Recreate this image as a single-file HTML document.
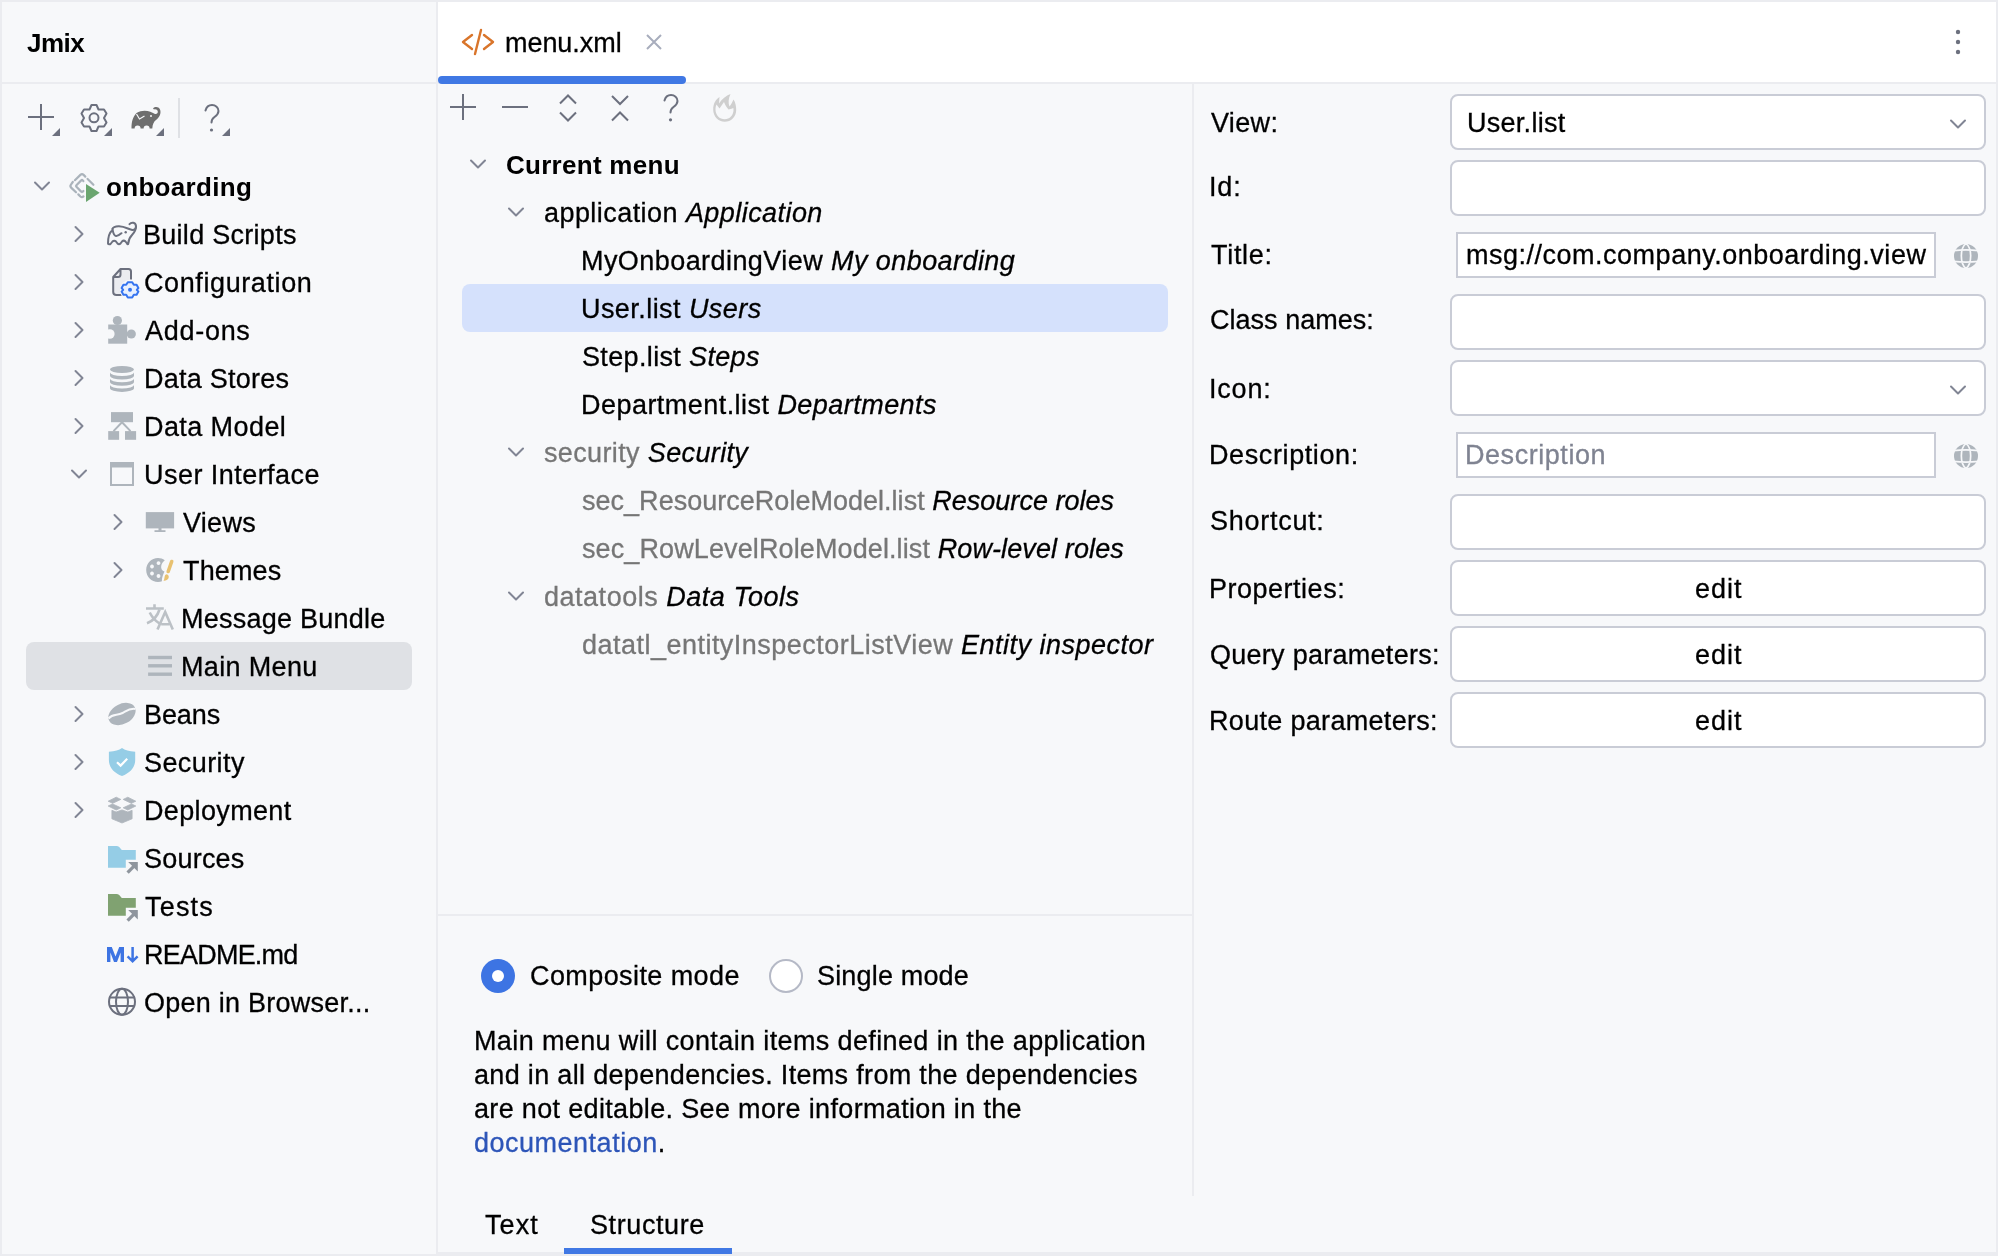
<!DOCTYPE html>
<html><head><meta charset="utf-8"><style>
html,body{margin:0;padding:0}
body{width:1998px;height:1256px;position:relative;overflow:hidden;background:#ebecf0;font-family:"Liberation Sans",sans-serif;color:#000}
.r{position:absolute}
.t{position:absolute;white-space:pre;font-size:27px;line-height:32px;letter-spacing:0.35px;will-change:transform;-webkit-text-stroke:0.3px}
.t.b, .t b{font-weight:bold;font-size:26px;letter-spacing:0.1px;-webkit-text-stroke:0}
.g{color:#767676}
.ph{color:#7f8391}
.lnk{color:#2d55b8}
.fld{position:absolute;box-sizing:border-box;background:#fff;border:2px solid #c9ccd6;border-radius:8px}
.fld.sq{border-radius:0}
i{font-style:italic}
</style></head><body>
<div class="r" style="left:2px;top:2px;width:434px;height:80px;background:#f7f8fa;"></div>
<div class="r" style="left:2px;top:84px;width:434px;height:1170px;background:#f7f8fa;"></div>
<div class="r" style="left:438px;top:2px;width:1558px;height:80px;background:#ffffff;"></div>
<div class="r" style="left:438px;top:84px;width:1558px;height:1168px;background:#f7f8fa;"></div>
<div class="r" style="left:1192px;top:84px;width:2px;height:1112px;background:#ebecf0;"></div>
<div class="r" style="left:438px;top:914px;width:754px;height:2px;background:#ebecf0;"></div>
<div class="t b" style="left:26.70px;top:27px;letter-spacing:-0.500px;">Jmix</div>
<svg class="r" style="left:0;top:90px" width="240" height="50" viewBox="0 90 240 50" fill="none"><path d="M28 117 H54 M41 104 V130" stroke="#6c707e" stroke-width="2"/><path d="M52 136 L60 128 L60 136 Z" fill="#6c707e"/><path d="M104 136 L112 128 L112 136 Z" fill="#6c707e"/><path d="M156 136 L164 128 L164 136 Z" fill="#6c707e"/><path d="M222 136 L230 128 L230 136 Z" fill="#6c707e"/></svg>
<div class="r" style="left:178px;top:98px;width:2px;height:40px;background:#dfe1e5;"></div>
<div class="r" style="left:26px;top:642px;width:386px;height:48px;background:#dfe1e5;border-radius:8px"></div>
<svg class="r" style="left:32px;top:179px;" width="20" height="14" viewBox="0 0 20 14" fill="none" stroke-linecap="butt"><path d="M3 3.5 L10 10.5 L17 3.5" stroke="#818594" stroke-width="2" stroke-linecap="round" stroke-linejoin="round"/></svg>
<div class="t b" style="left:105.80px;top:171px;letter-spacing:0.322px;">onboarding</div>
<svg class="r" style="left:72px;top:224px;" width="14" height="20" viewBox="0 0 14 20" fill="none" stroke-linecap="butt"><path d="M3.5 3 L10.5 10 L3.5 17" stroke="#818594" stroke-width="2" stroke-linecap="round" stroke-linejoin="round"/></svg>
<div class="t " style="left:143.30px;top:219px;letter-spacing:0.283px;">Build Scripts</div>
<svg class="r" style="left:72px;top:272px;" width="14" height="20" viewBox="0 0 14 20" fill="none" stroke-linecap="butt"><path d="M3.5 3 L10.5 10 L3.5 17" stroke="#818594" stroke-width="2" stroke-linecap="round" stroke-linejoin="round"/></svg>
<div class="t " style="left:143.70px;top:267px;letter-spacing:0.600px;">Configuration</div>
<svg class="r" style="left:72px;top:320px;" width="14" height="20" viewBox="0 0 14 20" fill="none" stroke-linecap="butt"><path d="M3.5 3 L10.5 10 L3.5 17" stroke="#818594" stroke-width="2" stroke-linecap="round" stroke-linejoin="round"/></svg>
<div class="t " style="left:145.00px;top:315px;letter-spacing:0.717px;">Add-ons</div>
<svg class="r" style="left:72px;top:368px;" width="14" height="20" viewBox="0 0 14 20" fill="none" stroke-linecap="butt"><path d="M3.5 3 L10.5 10 L3.5 17" stroke="#818594" stroke-width="2" stroke-linecap="round" stroke-linejoin="round"/></svg>
<div class="t " style="left:143.50px;top:363px;letter-spacing:0.250px;">Data Stores</div>
<svg class="r" style="left:72px;top:416px;" width="14" height="20" viewBox="0 0 14 20" fill="none" stroke-linecap="butt"><path d="M3.5 3 L10.5 10 L3.5 17" stroke="#818594" stroke-width="2" stroke-linecap="round" stroke-linejoin="round"/></svg>
<div class="t " style="left:143.50px;top:411px;letter-spacing:0.417px;">Data Model</div>
<svg class="r" style="left:69px;top:467px;" width="20" height="14" viewBox="0 0 20 14" fill="none" stroke-linecap="butt"><path d="M3 3.5 L10 10.5 L17 3.5" stroke="#818594" stroke-width="2" stroke-linecap="round" stroke-linejoin="round"/></svg>
<div class="t " style="left:143.50px;top:459px;letter-spacing:0.458px;">User Interface</div>
<svg class="r" style="left:110.5px;top:512px;" width="14" height="20" viewBox="0 0 14 20" fill="none" stroke-linecap="butt"><path d="M3.5 3 L10.5 10 L3.5 17" stroke="#818594" stroke-width="2" stroke-linecap="round" stroke-linejoin="round"/></svg>
<div class="t " style="left:182.90px;top:507px;letter-spacing:0.300px;">Views</div>
<svg class="r" style="left:110.5px;top:560px;" width="14" height="20" viewBox="0 0 14 20" fill="none" stroke-linecap="butt"><path d="M3.5 3 L10.5 10 L3.5 17" stroke="#818594" stroke-width="2" stroke-linecap="round" stroke-linejoin="round"/></svg>
<div class="t " style="left:182.50px;top:555px;letter-spacing:0.150px;">Themes</div>
<div class="t " style="left:181.00px;top:603px;letter-spacing:0.242px;">Message Bundle</div>
<div class="t " style="left:181.40px;top:651px;letter-spacing:0.350px;">Main Menu</div>
<svg class="r" style="left:72px;top:704px;" width="14" height="20" viewBox="0 0 14 20" fill="none" stroke-linecap="butt"><path d="M3.5 3 L10.5 10 L3.5 17" stroke="#818594" stroke-width="2" stroke-linecap="round" stroke-linejoin="round"/></svg>
<div class="t " style="left:143.50px;top:699px;letter-spacing:-0.100px;">Beans</div>
<svg class="r" style="left:72px;top:752px;" width="14" height="20" viewBox="0 0 14 20" fill="none" stroke-linecap="butt"><path d="M3.5 3 L10.5 10 L3.5 17" stroke="#818594" stroke-width="2" stroke-linecap="round" stroke-linejoin="round"/></svg>
<div class="t " style="left:144.00px;top:747px;letter-spacing:0.407px;">Security</div>
<svg class="r" style="left:72px;top:800px;" width="14" height="20" viewBox="0 0 14 20" fill="none" stroke-linecap="butt"><path d="M3.5 3 L10.5 10 L3.5 17" stroke="#818594" stroke-width="2" stroke-linecap="round" stroke-linejoin="round"/></svg>
<div class="t " style="left:143.50px;top:795px;letter-spacing:0.350px;">Deployment</div>
<div class="t " style="left:144.00px;top:843px;letter-spacing:0.217px;">Sources</div>
<div class="t " style="left:144.50px;top:891px;letter-spacing:1.200px;">Tests</div>
<div class="t " style="left:143.50px;top:939px;letter-spacing:-0.775px;">README.md</div>
<div class="t " style="left:144.00px;top:987px;letter-spacing:0.244px;">Open in Browser...</div>
<svg class="r" style="left:458px;top:26px;" width="40" height="32" viewBox="0 0 40 32" fill="none" stroke-linecap="butt"><path d="M14 9 L5 16 L14 23 M26 9 L35 16 L26 23 M23 4 L17 28" stroke="#d9752b" stroke-width="2.4" stroke-linecap="round" stroke-linejoin="round"/></svg>
<div class="t " style="left:504.80px;top:27px;letter-spacing:-0.050px;">menu.xml</div>
<svg class="r" style="left:644px;top:32px;" width="20" height="20" viewBox="0 0 20 20" fill="none" stroke-linecap="butt"><path d="M3 3 L17 17 M17 3 L3 17" stroke="#a8adbd" stroke-width="2"/></svg>
<div class="r" style="left:438px;top:76px;width:248px;height:8px;background:#4078e4;border-radius:4px"></div>
<svg class="r" style="left:1950px;top:26px" width="16" height="32" viewBox="0 0 16 32"><circle cx="8" cy="6" r="2.2" fill="#6c707e"/><circle cx="8" cy="16" r="2.2" fill="#6c707e"/><circle cx="8" cy="26" r="2.2" fill="#6c707e"/></svg>
<svg class="r" style="left:440px;top:86px" width="320" height="50" viewBox="440 86 320 50" fill="none" stroke="#6c707e" stroke-width="2"><path d="M450 107 H476 M463 94 V120"/><path d="M502 107 H528"/><path d="M560 103.5 L568 95.5 L576 103.5 M560 112.5 L568 120.5 L576 112.5"/><path d="M612 96 L620 104 L628 96 M612 120.5 L620 112.5 L628 120.5"/></svg>
<div class="r" style="left:462px;top:284px;width:706px;height:48px;background:#d5e1fc;border-radius:8px"></div>
<svg class="r" style="left:468px;top:157px;" width="20" height="14" viewBox="0 0 20 14" fill="none" stroke-linecap="butt"><path d="M3 3.5 L10 10.5 L17 3.5" stroke="#818594" stroke-width="2" stroke-linecap="round" stroke-linejoin="round"/></svg>
<div class="t " style="left:506.30px;top:149px;letter-spacing:0.282px;"><b style="letter-spacing:0.282px">Current menu</b></div>
<svg class="r" style="left:506px;top:205px;" width="20" height="14" viewBox="0 0 20 14" fill="none" stroke-linecap="butt"><path d="M3 3.5 L10 10.5 L17 3.5" stroke="#818594" stroke-width="2" stroke-linecap="round" stroke-linejoin="round"/></svg>
<div class="t " style="left:543.50px;top:197px;letter-spacing:0.441px;">application <i>Application</i></div>
<div class="t " style="left:581.00px;top:245px;letter-spacing:0.433px;">MyOnboardingView <i>My onboarding</i></div>
<div class="t " style="left:581.00px;top:293px;letter-spacing:0.436px;">User.list <i>Users</i></div>
<div class="t " style="left:582.00px;top:341px;letter-spacing:0.350px;">Step.list <i>Steps</i></div>
<div class="t " style="left:581.00px;top:389px;letter-spacing:0.458px;">Department.list <i>Departments</i></div>
<svg class="r" style="left:506px;top:445px;" width="20" height="14" viewBox="0 0 20 14" fill="none" stroke-linecap="butt"><path d="M3 3.5 L10 10.5 L17 3.5" stroke="#818594" stroke-width="2" stroke-linecap="round" stroke-linejoin="round"/></svg>
<div class="t " style="left:543.50px;top:437px;letter-spacing:0.362px;"><span class="g">security</span> <i>Security</i></div>
<div class="t " style="left:582.20px;top:485px;letter-spacing:0.020px;"><span class="g">sec_ResourceRoleModel.list</span> <i>Resource roles</i></div>
<div class="t " style="left:582.20px;top:533px;letter-spacing:0.111px;"><span class="g">sec_RowLevelRoleModel.list</span> <i>Row-level roles</i></div>
<svg class="r" style="left:506px;top:589px;" width="20" height="14" viewBox="0 0 20 14" fill="none" stroke-linecap="butt"><path d="M3 3.5 L10 10.5 L17 3.5" stroke="#818594" stroke-width="2" stroke-linecap="round" stroke-linejoin="round"/></svg>
<div class="t " style="left:543.50px;top:581px;letter-spacing:0.518px;"><span class="g">datatools</span> <i>Data Tools</i></div>
<div class="t " style="left:581.50px;top:629px;letter-spacing:0.480px;"><span class="g">datatl_entityInspectorListView</span> <i>Entity inspector</i></div>
<svg class="r" style="left:478px;top:956px" width="40" height="40" viewBox="0 0 40 40"><circle cx="20" cy="20" r="17" fill="#3d74e3"/><circle cx="20" cy="20" r="6" fill="#fff"/></svg>
<svg class="r" style="left:766px;top:956px" width="40" height="40" viewBox="0 0 40 40"><circle cx="20" cy="20" r="16" fill="#fff" stroke="#b5b9c6" stroke-width="2"/></svg>
<div class="t " style="left:530.30px;top:960px;letter-spacing:0.412px;">Composite mode</div>
<div class="t " style="left:817.40px;top:960px;letter-spacing:0.170px;">Single mode</div>
<div class="t " style="left:473.60px;top:1025px;letter-spacing:0.376px;">Main menu will contain items defined in the application</div>
<div class="t " style="left:474.00px;top:1059px;letter-spacing:0.323px;">and in all dependencies. Items from the dependencies</div>
<div class="t " style="left:473.60px;top:1093px;letter-spacing:0.336px;">are not editable. See more information in the</div>
<div class="t " style="left:474.00px;top:1127px;letter-spacing:0.504px;"><span class="lnk">documentation</span>.</div>
<div class="t " style="left:485.10px;top:1209px;letter-spacing:1.083px;">Text</div>
<div class="t " style="left:590.20px;top:1209px;letter-spacing:0.600px;">Structure</div>
<div class="r" style="left:564px;top:1248px;width:168px;height:6px;background:#4078e4;"></div>
<div class="t " style="left:1211.00px;top:107px;letter-spacing:0.350px;">View:</div>
<div class="fld" style="left:1450px;top:94px;width:536px;height:56px"></div>
<div class="t " style="left:1209.00px;top:171px;letter-spacing:0.850px;">Id:</div>
<div class="fld" style="left:1450px;top:160px;width:536px;height:56px"></div>
<div class="t " style="left:1211.00px;top:239px;letter-spacing:0.710px;">Title:</div>
<div class="fld sq" style="left:1456px;top:232px;width:480px;height:46px"></div>
<div class="t " style="left:1210.00px;top:304px;letter-spacing:0.023px;">Class names:</div>
<div class="fld" style="left:1450px;top:294px;width:536px;height:56px"></div>
<div class="t " style="left:1209.00px;top:373px;letter-spacing:0.800px;">Icon:</div>
<div class="fld" style="left:1450px;top:360px;width:536px;height:56px"></div>
<div class="t " style="left:1209.00px;top:439px;letter-spacing:0.605px;">Description:</div>
<div class="fld sq" style="left:1456px;top:432px;width:480px;height:46px"></div>
<div class="t " style="left:1210.00px;top:505px;letter-spacing:0.725px;">Shortcut:</div>
<div class="fld" style="left:1450px;top:494px;width:536px;height:56px"></div>
<div class="t " style="left:1209.00px;top:573px;letter-spacing:0.510px;">Properties:</div>
<div class="fld" style="left:1450px;top:560px;width:536px;height:56px"></div>
<div class="t " style="left:1210.00px;top:639px;letter-spacing:0.275px;">Query parameters:</div>
<div class="fld" style="left:1450px;top:626px;width:536px;height:56px"></div>
<div class="t " style="left:1209.00px;top:705px;letter-spacing:0.312px;">Route parameters:</div>
<div class="fld" style="left:1450px;top:692px;width:536px;height:56px"></div>
<div class="t " style="left:1467.40px;top:107px;letter-spacing:0.275px;">User.list</div>
<svg class="r" style="left:1948px;top:117px;" width="20" height="14" viewBox="0 0 20 14" fill="none" stroke-linecap="butt"><path d="M3 3.5 L10 10.5 L17 3.5" stroke="#818594" stroke-width="2" stroke-linecap="round" stroke-linejoin="round"/></svg>
<svg class="r" style="left:1948px;top:383px;" width="20" height="14" viewBox="0 0 20 14" fill="none" stroke-linecap="butt"><path d="M3 3.5 L10 10.5 L17 3.5" stroke="#818594" stroke-width="2" stroke-linecap="round" stroke-linejoin="round"/></svg>
<div class="t " style="left:1466.30px;top:239px;letter-spacing:0.506px;">msg://com.company.onboarding.view</div>
<div class="t " style="left:1465.00px;top:439px;letter-spacing:0.550px;"><span class="ph">Description</span></div>
<div class="t " style="left:1695.30px;top:573px;letter-spacing:0.950px;">edit</div>
<div class="t " style="left:1695.30px;top:639px;letter-spacing:0.950px;">edit</div>
<div class="t " style="left:1695.30px;top:705px;letter-spacing:0.950px;">edit</div>
<svg class="r" style="left:1950px;top:240px" width="32" height="32" viewBox="0 0 32 32"><circle cx="16" cy="16" r="12" fill="#aeb5bc"/><path d="M3.5 10.6 Q16 9 28.5 10.6 M3.5 21.4 Q16 23 28.5 21.4 M16 3.6 C9.8 8 9.8 24 16 28.4 M16 3.6 C22.2 8 22.2 24 16 28.4" stroke="#f7f8fa" stroke-width="1.7" fill="none"/></svg>
<svg class="r" style="left:1950px;top:440px" width="32" height="32" viewBox="0 0 32 32"><circle cx="16" cy="16" r="12" fill="#aeb5bc"/><path d="M3.5 10.6 Q16 9 28.5 10.6 M3.5 21.4 Q16 23 28.5 21.4 M16 3.6 C9.8 8 9.8 24 16 28.4 M16 3.6 C22.2 8 22.2 24 16 28.4" stroke="#f7f8fa" stroke-width="1.7" fill="none"/></svg>
<svg class="r" style="left:76px;top:100px" width="40" height="38" viewBox="0 0 40 38" fill="none"><path d="M15.5 5 H20.5 L22.5 9.5 H28 L30.5 13.5 L28 18 L30.5 22.5 L28 26.5 H22.5 L20.5 31 H15.5 L13.5 26.5 H8 L5.5 22.5 L8 18 L5.5 13.5 L8 9.5 H13.5 Z" stroke="#6c707e" stroke-width="2" stroke-linejoin="round"/><circle cx="18" cy="17.8" r="4.5" stroke="#6c707e" stroke-width="2"/></svg>
<svg class="r" style="left:126px;top:100px" width="40" height="34" viewBox="0 0 40 34" fill="none"><path d="M5.5 28.5 C5.5 21 7 17 10.5 13 C13 11.5 16 10.8 18.5 10.8 C23 10.8 26 12.5 28.5 13.8 C30.5 14.5 32 13.5 31.8 11.5 C31.5 9.5 29.5 9 28 9.5 L27 8.5 C29 6.5 32.5 6.5 34 9.5 C35.5 13 33.5 17.5 30 20 C28 21.5 26.5 24 26.3 28.5 L23.6 28.5 A3 3 0 0 0 17.6 28.5 H14.6 A3 3 0 0 0 8.6 28.5 Z" fill="#6e6e6e"/><path d="M10.5 14 L13.5 19 L18.5 16" stroke="#f7f8fa" stroke-width="1.2"/><circle cx="25" cy="16" r="1" fill="#f7f8fa"/></svg>
<svg class="r" style="left:196px;top:100px" width="40" height="40" viewBox="0 0 40 40" fill="none"><path d="M9.5 10.5 C10.5 6.5 13.5 5 16 5 C19.5 5 22.5 7.5 22.5 11 C22.5 14 20.5 15.5 18.5 17 C16.5 18.5 15.5 20 15.5 22.5" stroke="#6c707e" stroke-width="2" stroke-linecap="round"/><circle cx="15.5" cy="30" r="1.6" fill="#6c707e"/></svg>
<svg class="r" style="left:656px;top:90px" width="32" height="36" viewBox="0 0 32 36" fill="none"><path d="M8.5 10.5 C9.5 6.5 12.5 5 15 5 C18.5 5 21.5 7.5 21.5 11 C21.5 14 19.5 15.5 17.5 17 C15.5 18.5 14.5 20 14.5 22.5" stroke="#6c707e" stroke-width="2" stroke-linecap="round"/><circle cx="14.5" cy="29.8" r="1.6" fill="#6c707e"/></svg>
<svg class="r" style="left:704px;top:90px" width="40" height="36" viewBox="0 0 40 36" fill="none"><path fill-rule="evenodd" fill="#cfcfcf" d="M9.2 19.5 C9.2 13 12 9.5 15.5 7 L15 13.5 C18 9 22 5.5 26.5 4 C24.5 8 24 13 25.5 16.5 C27 14.5 28.5 12 29.5 9.5 C31.5 12.5 32.2 16 32.2 20 C32.2 27 27 31.8 20.7 31.8 C14.3 31.8 9.2 26.5 9.2 19.5 Z M11.5 19.5 C11.5 25 15.5 29.3 20.7 29.3 C25.8 29.3 29.5 25 29.5 20 C29.5 18.5 29.3 17.5 28.5 18.5 L24.5 19.5 C22.5 17 21 15 20 12 L15.5 18.5 L12.5 14.5 C11.8 16 11.5 17.5 11.5 19.5 Z"/></svg>
<svg class="r" style="left:64px;top:168px" width="40" height="40" viewBox="0 0 40 40" fill="none"><g stroke="#aab3bb" stroke-width="2.2" stroke-linecap="round" stroke-linejoin="round" fill="none"><path d="M10.9 12.2 L16.4 6.9 Q18 5.4 19.6 6.9 L21.3 8.6"/><path d="M23.6 10.9 L29.4 16.8"/><path d="M8.8 14 L7.1 16.4 Q5.7 18 7.1 19.6 L12 24.3"/><path d="M14.3 26.4 L16.4 28.5 Q18 29.8 19.5 28.4"/><path d="M19.4 13.2 L18.8 12.4 Q18 11.5 17.2 12.4 L12.4 17.2 Q11.6 18 12.4 18.8 L17.2 23.6 Q18 24.5 18.8 23.6 L19.4 23"/></g><path d="M22 15.9 L22 33.9 L35.7 24.8 Z" fill="#6aa56f"/></svg>
<svg class="r" style="left:102px;top:216px" width="40" height="34" viewBox="0 0 40 34" fill="none"><path d="M27.5 8.2 C29.5 5.8 33.5 6.2 34 10 C34.3 13 32 14.5 29.5 13.8 C26 13 23 10.5 17 10.3 C13 10.2 10.5 11.5 10.5 13" stroke="#6c707e" stroke-width="2" stroke-linecap="round"/><path d="M10.5 13 C11 16 11.5 19.5 14 20 C16 20.3 18 18.5 19.5 17.2" stroke="#6c707e" stroke-width="2" stroke-linecap="round"/><path d="M10 14.5 C7 17 6 21 6 27.5 C6 28.5 8 28.5 8.5 28 L10.5 25.5 C11.5 24.5 13 24.5 14 25.5 L15.5 27.5 C16.5 28.5 17.5 28.5 18.5 27.5 L20 25.5 C21 24.5 22.5 24.5 23.5 25.5 L25 27.5 C25.5 28.5 26.3 28.3 26.3 27.5 C26.5 23 28 21 30 19 C32.5 16.5 34 14.5 34 10" stroke="#6c707e" stroke-width="2" stroke-linejoin="round"/><circle cx="23.7" cy="16.3" r="1.2" fill="#6c707e"/></svg>
<svg class="r" style="left:104px;top:264px" width="40" height="38" viewBox="0 0 40 38" fill="none"><path d="M9.2 13 L16.5 5 H24.5 C26 5 27 6 27 7.5 V31 H12.5 C10.5 31 9.2 29.7 9.2 28 Z" fill="#ebecf0"/><path d="M9.2 13 V28 C9.2 29.7 10.5 31 12.5 31 H17.5 M27 15.5 V7.5 C27 6 26 5 24.5 5 H16.5 L9.2 13 H14 C15.5 13 16.5 12 16.5 10.5 V5" stroke="#6c707e" stroke-width="2" stroke-linejoin="round"/><circle cx="26" cy="25.8" r="10" fill="#f7f8fa"/><path d="M23.8 18.2 H28.2 L29.8 20.8 H32.6 L34.4 24 L32.8 25.8 L34.4 27.6 L32.6 30.8 H29.8 L28.2 33.4 H23.8 L22.2 30.8 H19.4 L17.6 27.6 L19.2 25.8 L17.6 24 L19.4 20.8 H22.2 Z" fill="#e8f0fe" stroke="#3574f0" stroke-width="2" stroke-linejoin="round"/><circle cx="26" cy="25.8" r="2" fill="#3574f0"/></svg>
<svg class="r" style="left:104px;top:312px" width="36" height="36" viewBox="0 0 36 36" fill="none"><rect x="4.2" y="12.5" width="19" height="19.2" fill="#aeb5bc"/><circle cx="13.4" cy="8.5" r="4.6" fill="#aeb5bc"/><circle cx="27.3" cy="22" r="4.6" fill="#aeb5bc"/><circle cx="5.8" cy="22" r="4.8" fill="#f7f8fa"/></svg>
<svg class="r" style="left:104px;top:360px" width="36" height="36" viewBox="0 0 36 36" fill="none"><ellipse cx="18" cy="9.5" rx="12" ry="3.5" fill="#aeb5bc"/><path d="M6 12.6 A12 3.5 0 0 0 30 12.6 V16.0 A12 3.5 0 0 1 6 16.0 Z" fill="#aeb5bc"/><path d="M6 18.8 A12 3.5 0 0 0 30 18.8 V22.2 A12 3.5 0 0 1 6 22.2 Z" fill="#aeb5bc"/><path d="M6 25.0 A12 3.5 0 0 0 30 25.0 V28.4 A12 3.5 0 0 1 6 28.4 Z" fill="#aeb5bc"/></svg>
<svg class="r" style="left:104px;top:408px" width="36" height="36" viewBox="0 0 36 36" fill="none"><rect x="7" y="4.1" width="22" height="10.1" fill="#aeb5bc"/><rect x="4.2" y="23.1" width="10.9" height="8.7" fill="#aeb5bc"/><rect x="21" y="23.1" width="11.1" height="8.7" fill="#aeb5bc"/><path d="M9.5 23.1 L18 14.2 L26.5 23.1" stroke="#aeb5bc" stroke-width="2"/></svg>
<svg class="r" style="left:104px;top:456px" width="36" height="36" viewBox="0 0 36 36" fill="none"><rect x="7" y="7" width="22" height="22" stroke="#aeb5bc" stroke-width="2"/><rect x="6" y="6" width="24" height="5.5" fill="#aeb5bc"/></svg>
<svg class="r" style="left:142px;top:504px" width="36" height="36" viewBox="0 0 36 36" fill="none"><rect x="3.8" y="8.1" width="28.3" height="16.3" fill="#aeb5bc"/><rect x="16.5" y="24" width="3" height="3" fill="#aeb5bc"/><rect x="12.5" y="26.2" width="11" height="1.8" fill="#aeb5bc"/></svg>
<svg class="r" style="left:142px;top:552px" width="36" height="36" viewBox="0 0 36 36" fill="none"><path fill-rule="evenodd" fill="#aeb5bc" d="M22.8 8.3 C20.8 6.8 18.5 6 16 6 C9.4 6 4.2 11.4 4.2 18 C4.2 24.6 9.4 30 16 30 C17.5 30 18.8 29.7 20 29.3 C19.8 27 20.2 24.5 22.5 19.5 C20 18.8 18.8 16.5 19.2 14 C19.6 11.5 21 9.8 22.8 8.3 Z M16.5 9.2 a1.9 1.9 0 1 0 0.01 0 Z M10 12.6 a1.9 1.9 0 1 0 0.01 0 Z M10 19.6 a1.9 1.9 0 1 0 0.01 0 Z M16.5 22.1 a1.9 1.9 0 1 0 0.01 0 Z"/><path d="M29.7 9.5 L26.2 19.5" stroke="#e8c170" stroke-width="3.6" stroke-linecap="round"/><path d="M24.6 22.3 C26.5 22.5 27.3 24.5 26.5 26.3 C25.6 28.2 23.5 29 21.5 28.7 C22.5 27.5 22.3 25.5 22.8 24 C23.2 23 23.8 22.3 24.6 22.3 Z" fill="#e8c170"/></svg>
<svg class="r" style="left:142px;top:600px" width="36" height="36" viewBox="0 0 36 36" fill="none"><g stroke="#bcc1c6" stroke-width="2.6" fill="none"><path d="M4 8.5 H21.8 M12.5 4.2 V8.5"/><path d="M7.7 12.5 C10 17 13.5 21 17.5 23.5"/><path d="M17.5 9.5 C15.5 16 11 21 5 23.2"/><path d="M15.5 29.5 L23.2 12 L30.8 29.5 M19.2 24.2 H27.3"/></g></svg>
<svg class="r" style="left:142px;top:648px" width="36" height="36" viewBox="0 0 36 36" fill="none"><rect x="6.1" y="7.8" width="23.9" height="3.4" fill="#aeb5bc"/><rect x="6.1" y="16.1" width="23.9" height="3.4" fill="#aeb5bc"/><rect x="6.1" y="24.5" width="23.9" height="3.4" fill="#aeb5bc"/></svg>
<svg class="r" style="left:104px;top:696px" width="36" height="36" viewBox="0 0 36 36" fill="none"><ellipse cx="18" cy="18" rx="14.5" ry="10" transform="rotate(-28 18 18)" fill="#aeb5bc"/><path d="M4.5 22.5 C9 17 13 20 18.5 17 C23 14.5 26 12 31.5 13" stroke="#f7f8fa" stroke-width="2"/></svg>
<svg class="r" style="left:104px;top:744px" width="36" height="36" viewBox="0 0 36 36" fill="none"><path d="M18 3.9 C15 6 11 7.2 4.9 7.8 V16 C4.9 23.5 10 29 18 32 C26 29 31.2 23.5 31.2 16 V7.8 C25 7.2 21 6 18 3.9 Z" fill="#95cde6"/><path d="M13 18.2 L16.6 21.6 L23.2 14.8" stroke="#fff" stroke-width="2.2"/></svg>
<svg class="r" style="left:104px;top:792px" width="36" height="36" viewBox="0 0 36 36" fill="none"><g fill="#aeb5bc" stroke="#aeb5bc" stroke-width="0.8" stroke-linejoin="round"><path d="M4.2 9.2 L12.2 5.2 L16.8 7.4 L8.7 11.3 Z"/><path d="M31.8 9.2 L23.8 5.2 L19.2 7.4 L27.3 11.3 Z"/><path d="M4.2 14 L8.5 11.9 L16.8 15.8 L12.2 18 Z"/><path d="M31.8 14 L27.5 11.9 L19.2 15.8 L23.8 18 Z"/><path d="M7.9 18.3 L12.1 20 L18 17.9 L23.9 20 L28.1 18.3 V26.8 L18 31 L7.9 26.8 Z"/></g></svg>
<svg class="r" style="left:104px;top:840px" width="36" height="36" viewBox="0 0 36 36" fill="none"><path d="M4 5.9 H12.5 C13.5 5.9 14.5 6.3 15.2 7 L17.8 10 H31.8 V19.8 H21.8 V27.8 H4 Z" fill="#95cde6"/><path d="M24.2 22 H33.8 V31.6 Z" fill="#8e959d"/><path d="M23.6 32.6 L30 26.2" stroke="#8e959d" stroke-width="3.3"/></svg>
<svg class="r" style="left:104px;top:888px" width="36" height="36" viewBox="0 0 36 36" fill="none"><path d="M4 5.9 H12.5 C13.5 5.9 14.5 6.3 15.2 7 L17.8 10 H31.8 V19.8 H21.8 V27.8 H4 Z" fill="#80a271"/><path d="M24.2 22 H33.8 V31.6 Z" fill="#8e959d"/><path d="M23.6 32.6 L30 26.2" stroke="#8e959d" stroke-width="3.3"/></svg>
<svg class="r" style="left:104px;top:936px" width="36" height="36" viewBox="0 0 36 36" fill="none"><path d="M3 26 V11 H7.8 L11.5 20.5 L15.2 11 H20 V26 H16.6 V16.5 L13 26 H10 L6.4 16.5 V26 Z" fill="#3d74e3"/><path d="M28.6 11 V25 M23.6 20.3 L28.6 25.3 L33.6 20.3" stroke="#3d74e3" stroke-width="2.5" fill="none"/></svg>
<svg class="r" style="left:104px;top:984px" width="36" height="36" viewBox="0 0 36 36" fill="none"><g stroke="#6c707e" stroke-width="2" fill="none"><circle cx="18" cy="17.8" r="13"/><path d="M5 13.5 H31 M5 22 H31"/><ellipse cx="18" cy="17.8" rx="6" ry="13"/></g></svg>
</body></html>
